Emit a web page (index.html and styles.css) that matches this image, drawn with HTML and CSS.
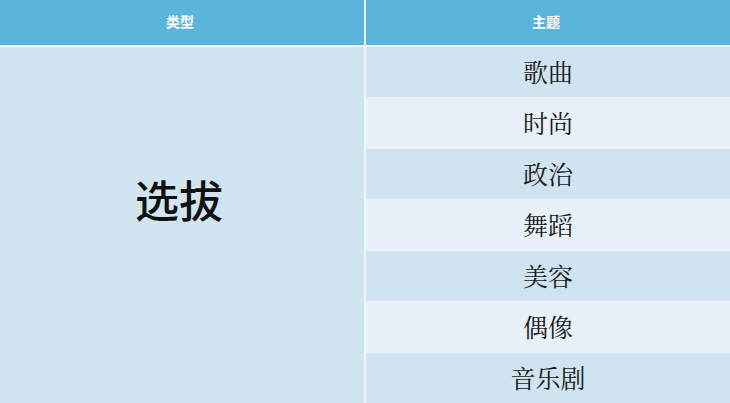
FILE: index.html
```html
<!DOCTYPE html>
<html lang="zh">
<head>
<meta charset="utf-8">
<link rel="stylesheet" href="styles.css">
</head>
<body>
<div class="table">
  <div class="th">类型</div>
  <div class="th">主题</div>
  <div class="type">选拔</div>
  <div class="topics">
    <div class="cell dark">歌曲</div>
    <div class="cell light">时尚</div>
    <div class="cell dark">政治</div>
    <div class="cell light">舞蹈</div>
    <div class="cell dark">美容</div>
    <div class="cell light">偶像</div>
    <div class="cell dark">音乐剧</div>
  </div>
</div>
</body>
</html>
```
FILE: styles.css
```css
html, body {
  margin: 0;
  padding: 0;
}
body {
  width: 730px;
  height: 403px;
  overflow: hidden;
  font-family: "Noto Sans CJK SC", "Noto Sans", sans-serif;
}
.table {
  display: grid;
  grid-template-columns: 364px 1fr;
  grid-template-rows: 45px 1fr;
  column-gap: 2px;
  row-gap: 2px;
  height: 403px;
  background: #eef6fb;
}
.th {
  background: #5bb4dc;
  color: #ffffff;
  font-size: 14px;
  font-weight: 700;
  display: flex;
  align-items: center;
  justify-content: center;
  padding-bottom: 4px;
  padding-right: 4px;
}
.type {
  background: #d1e5f1;
  color: #111;
  font-size: 44px;
  font-weight: 500;
  display: flex;
  align-items: center;
  justify-content: center;
  padding-bottom: 52px;
  padding-right: 6px;
}
.topics {
  display: flex;
  flex-direction: column;
}
.cell {
  flex: 1;
  display: flex;
  align-items: center;
  justify-content: center;
  font-family: "Noto Serif CJK SC", "Noto Sans CJK SC", serif;
  font-size: 25px;
  color: #1a1a1a;
  border-top: 1px solid #e9f3f9;
  padding-bottom: 2px;
}
.cell:first-child {
  border-top: none;
}
.dark {
  background: #cfe3f0;
}
.light {
  background: #e8f1f9;
}
```
